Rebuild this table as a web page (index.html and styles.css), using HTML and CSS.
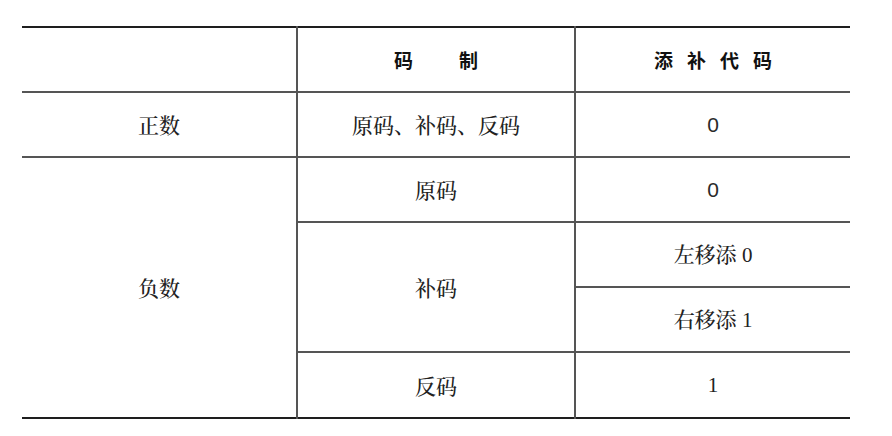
FILE: index.html
```html
<!DOCTYPE html>
<html lang="zh-CN">
<head>
<meta charset="utf-8">
<title>码制与添补代码</title>
<link rel="stylesheet" href="styles.css">
</head>
<body>
<div class="page">
  <table class="code-table">
    <thead>
      <tr>
        <th class="c1"></th>
        <th class="c2"><span class="h-pair"><span>码</span><span>制</span></span></th>
        <th class="c3"><span class="h-spread">添补代码</span></th>
      </tr>
    </thead>
    <tbody>
      <tr>
        <td class="c1">正数</td>
        <td class="c2">原码、补码、反码</td>
        <td class="c3 zero">0</td>
      </tr>
      <tr>
        <td class="c1" rowspan="4">负数</td>
        <td class="c2">原码</td>
        <td class="c3 zero">0</td>
      </tr>
      <tr>
        <td class="c2" rowspan="2">补码</td>
        <td class="c3">左移添<span class="num"> 0</span></td>
      </tr>
      <tr>
        <td class="c3">右移添<span class="num"> 1</span></td>
      </tr>
      <tr class="last">
        <td class="c2">反码</td>
        <td class="c3 num">1</td>
      </tr>
    </tbody>
  </table>
</div>
</body>
</html>
```

FILE: styles.css
```css
html, body {
  margin: 0;
  padding: 0;
  background: #ffffff;
}

.page {
  padding: 26px 0 0 22px;
}

.code-table {
  border-collapse: collapse;
  table-layout: fixed;
  width: 824px;
  border-top: 2px solid #1e1e1e;
  border-bottom: 2px solid #1e1e1e;
  font-family: "Noto Serif CJK SC", "Noto Sans CJK SC", serif;
  color: #222222;
}

.code-table th,
.code-table td {
  height: 63px;
  padding: 0;
  text-align: center;
  vertical-align: middle;
  border-top: 2px solid #555555;
  font-size: 21px;
  font-weight: 500;
  line-height: 1;
}

.code-table .last td {
  height: 64px;
}

.code-table .c1 { width: 274px; }
.code-table .c2 { width: 276px; border-left: 2px solid #555555; }
.code-table .c3 { width: 274px; border-left: 2px solid #555555; }

.code-table th {
  font-family: "Noto Sans CJK SC", sans-serif;
  font-weight: 700;
  font-size: 19px;
  color: #111111;
  border-top: none;
}

.h-pair {
  display: inline-flex;
  gap: 46px;
}

.h-spread {
  letter-spacing: 14px;
  padding-left: 14px;
}

.num {
  font-family: "Liberation Serif", serif;
  font-size: 21px;
}

.zero {
  font-family: "Liberation Sans", sans-serif;
  font-size: 20px;
  font-weight: 700;
  color: #2a2a2a;
}
```
